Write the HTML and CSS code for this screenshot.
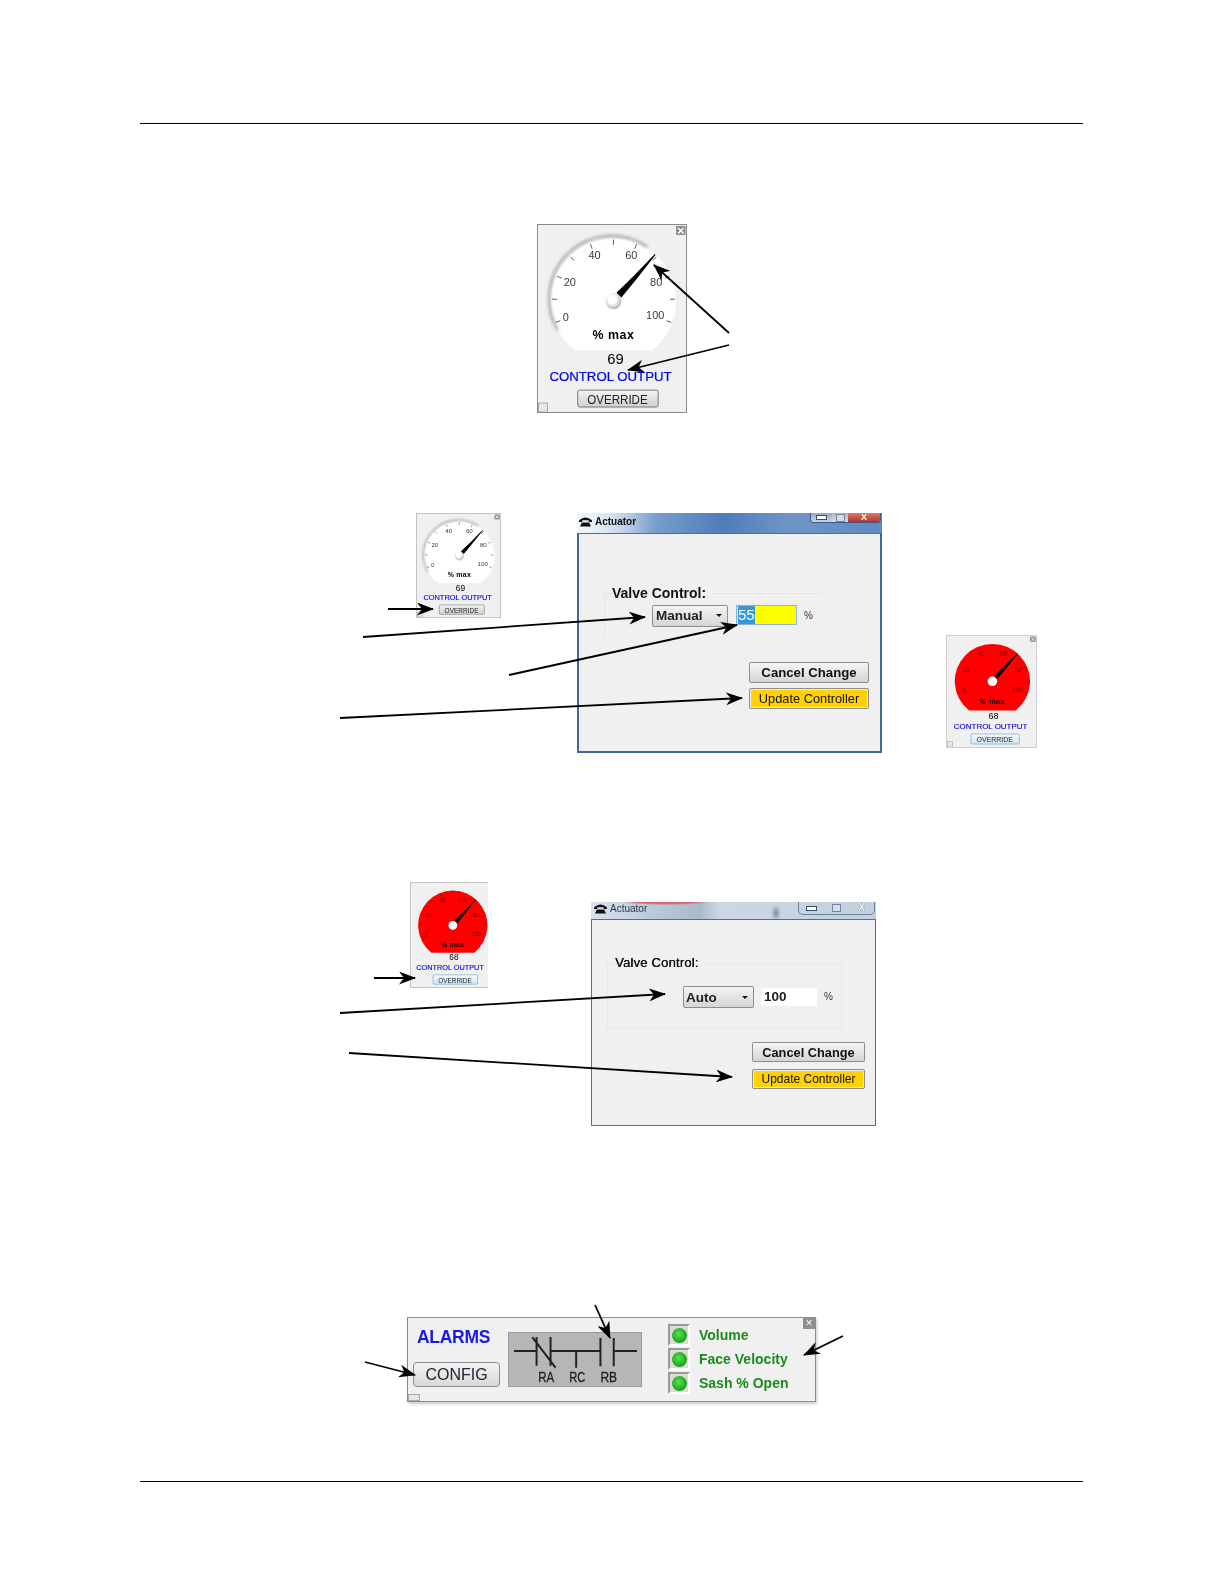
FILE: index.html
```html
<!DOCTYPE html>
<html lang="en">

<head>
    <meta charset="UTF-8">
    <meta name="viewport" content="width=device-width, initial-scale=1.0">
    <title>Actuator control</title>
    <link rel="stylesheet" href="styles.css">
</head>

<body>
    <!-- shared gauge parts -->
    <svg class="defs" aria-hidden="true">
        <defs>
            <linearGradient id="btn" x1="0" y1="0" x2="0" y2="1">
                <stop offset="0" stop-color="#f4f4f4" />
                <stop offset="1" stop-color="#cfcfcf" />
            </linearGradient>
            <linearGradient id="btnblue" x1="0" y1="0" x2="0" y2="1">
                <stop offset="0" stop-color="#f2f9fd" />
                <stop offset="1" stop-color="#cfe6f3" />
            </linearGradient>
            <radialGradient id="hub" cx="0.42" cy="0.38" r="0.7">
                <stop offset="0.35" stop-color="#fff" />
                <stop offset="1" stop-color="#a8a8a8" />
            </radialGradient>
            <filter id="soft" x="-20%" y="-20%" width="140%" height="140%">
                <feGaussianBlur stdDeviation="1.5" />
            </filter>
            <symbol id="ticks" overflow="visible">
                <path d="M76 14.7V19.9M52.8 19.2L54.6 23.9M99.2 19.2L97.4 23.9M32.9 32.1L36.4 35.7M119.1 32.1L115.6 35.7M19.3 51.5L23.9 53.5M132.7 51.5L128.1 53.5M14.1 74.5L19.1 74.7M137.9 74.5L132.9 74.7M17.7 97.9L22.4 96.2M134.3 97.9L129.6 96.2" stroke="#333" stroke-width="0.8" fill="none" />
            </symbol>
            <symbol id="needle" overflow="visible">
                <path d="M117.6 29.2L118.4 30L99.5 54L84 73L79 68L97 50.5Z" fill="#000" />
            </symbol>
            <symbol id="close" overflow="visible">
                <rect x="139" y="1" width="9.5" height="9" fill="#8f8f8f" />
                <path d="M141 3L146.5 8.5M146.5 3L141 8.5" stroke="#fff" stroke-width="1.4" />
            </symbol>
            <symbol id="corner" overflow="visible">
                <rect x="0.5" y="179" width="9" height="9" fill="#e9e9df" stroke="#aaa" />
            </symbol>
        </defs>
    </svg>

    <div class="page">
        <div class="rule"></div>

        <section class="figure figure-one">
            <div class="gauge gauge-main shot">
                <svg viewBox="0 0 149 188" preserveAspectRatio="none">
                    <path class="dial" d="M37 126A63 63 0 1 1 115 126Z" />
                    <path class="dial-shade" d="M20 106A63 63 0 0 1 110 22" filter="url(#soft)" />
                    <use href="#ticks" />
                    <text class="num" x="28" y="97" text-anchor="middle">0</text>
                    <text class="num" x="32" y="61" text-anchor="middle">20</text>
                    <text class="num" x="57" y="34" text-anchor="middle">40</text>
                    <text class="num" x="94" y="34" text-anchor="middle">60</text>
                    <text class="num" x="119" y="61" text-anchor="middle">80</text>
                    <text class="num" x="118" y="95" text-anchor="middle">100</text>
                    <use href="#needle" />
                    <circle cx="76" cy="76.7" r="8" fill="url(#hub)" />
                    <text class="unit" x="76" y="115" text-anchor="middle">% max</text>
                    <text class="value" x="78" y="140" text-anchor="middle">69</text>
                    <text class="caption" x="73" y="157" text-anchor="middle" textLength="123" lengthAdjust="spacingAndGlyphs">CONTROL OUTPUT</text>
                    <rect x="40" y="166" width="81" height="17" rx="2" fill="url(#btn)" stroke="#777" />
                    <text class="override" x="80" y="180" text-anchor="middle" textLength="61" lengthAdjust="spacingAndGlyphs">OVERRIDE</text>
                    <use href="#close" />
                    <use href="#corner" />
                </svg>
            </div>
        </section>

        <section class="figure figure-two">
            <div class="gauge gauge-small shot">
                <svg viewBox="0 0 149 188" preserveAspectRatio="none">
                    <path class="dial" d="M37 126A63 63 0 1 1 115 126Z" />
                    <path class="dial-shade" d="M20 106A63 63 0 0 1 110 22" filter="url(#soft)" />
                    <use href="#ticks" />
                    <text class="num" x="28" y="97" text-anchor="middle">0</text>
                    <text class="num" x="32" y="61" text-anchor="middle">20</text>
                    <text class="num" x="57" y="34" text-anchor="middle">40</text>
                    <text class="num" x="94" y="34" text-anchor="middle">60</text>
                    <text class="num" x="119" y="61" text-anchor="middle">80</text>
                    <text class="num" x="118" y="95" text-anchor="middle">100</text>
                    <use href="#needle" />
                    <circle cx="76" cy="76.7" r="8" fill="url(#hub)" />
                    <text class="unit" x="76" y="115" text-anchor="middle">% max</text>
                    <text class="value" x="78" y="140" text-anchor="middle">69</text>
                    <text class="caption" x="73" y="157" text-anchor="middle" textLength="123" lengthAdjust="spacingAndGlyphs">CONTROL OUTPUT</text>
                    <rect x="40" y="166" width="81" height="17" rx="2" fill="url(#btn)" stroke="#777" />
                    <text class="override" x="80" y="180" text-anchor="middle" textLength="61" lengthAdjust="spacingAndGlyphs">OVERRIDE</text>
                    <use href="#close" />
                    <use href="#corner" />
                </svg>
            </div>

            <div class="window window-one shot">
                <div class="titlebar">
                    <div class="title">
                        <svg class="phone" viewBox="0 0 14 12">
                            <path d="M0 4.5Q7 -1.5 14 4.5V6.5H10.5V4.5H3.5V6.5H0ZM3 7H11L13 11.5H1Z" fill="#111" />
                        </svg>
                        <span>Actuator</span>
                    </div>
                    <div class="winbtns">
                        <span class="winbtn win-min"></span>
                        <span class="winbtn win-max"></span>
                        <span class="winbtn win-close">X</span>
                    </div>
                </div>
                <div class="winbody">
                    <fieldset class="group">
                        <legend>Valve Control:</legend>
                        <div class="control-row">
                            <div class="select"><span>Manual</span><i class="caret"></i></div>
                            <div class="field field-edit"><span class="selected">55</span></div>
                            <span class="percent">%</span>
                        </div>
                    </fieldset>
                    <div class="actions">
                        <button class="btn btn-cancel" type="button">Cancel Change</button>
                        <button class="btn btn-update" type="button">Update Controller</button>
                    </div>
                </div>
            </div>

            <div class="gauge gauge-red-right shot">
                <svg viewBox="0 0 149 188" preserveAspectRatio="none">
                    <path class="dial dial-red" d="M37 126A63 63 0 1 1 115 126Z" />
                    <use href="#ticks" />
                    <text class="num num-red" x="28" y="97" text-anchor="middle">0</text>
                    <text class="num num-red" x="32" y="61" text-anchor="middle">20</text>
                    <text class="num num-red" x="57" y="34" text-anchor="middle">40</text>
                    <text class="num num-red" x="94" y="34" text-anchor="middle">60</text>
                    <text class="num num-red" x="119" y="61" text-anchor="middle">80</text>
                    <text class="num num-red" x="118" y="95" text-anchor="middle">100</text>
                    <use href="#needle" />
                    <circle cx="76" cy="76.7" r="8" fill="#fff" />
                    <text class="unit" x="76" y="115" text-anchor="middle">% max</text>
                    <text class="value" x="78" y="140" text-anchor="middle">68</text>
                    <text class="caption" x="73" y="157" text-anchor="middle" textLength="123" lengthAdjust="spacingAndGlyphs">CONTROL OUTPUT</text>
                    <rect x="40" y="166" width="81" height="17" rx="2" fill="url(#btnblue)" stroke="#6f9db8" />
                    <text class="override" x="80" y="180" text-anchor="middle" textLength="61" lengthAdjust="spacingAndGlyphs">OVERRIDE</text>
                    <use href="#close" />
                    <use href="#corner" />
                </svg>
            </div>
        </section>

        <section class="figure figure-three">
            <div class="gauge gauge-red-left shot">
                <svg viewBox="0 0 140 188" preserveAspectRatio="none">
                    <path class="dial dial-red" d="M37 126A63 63 0 1 1 115 126Z" />
                    <use href="#ticks" />
                    <text class="num num-red" x="28" y="97" text-anchor="middle">0</text>
                    <text class="num num-red" x="32" y="61" text-anchor="middle">20</text>
                    <text class="num num-red" x="57" y="34" text-anchor="middle">40</text>
                    <text class="num num-red" x="94" y="34" text-anchor="middle">60</text>
                    <text class="num num-red" x="119" y="61" text-anchor="middle">80</text>
                    <text class="num num-red" x="118" y="95" text-anchor="middle">100</text>
                    <use href="#needle" />
                    <circle cx="76" cy="76.7" r="8" fill="#fff" />
                    <text class="unit" x="76" y="115" text-anchor="middle">% max</text>
                    <text class="value" x="78" y="140" text-anchor="middle">68</text>
                    <text class="caption" x="71" y="157" text-anchor="middle" textLength="123" lengthAdjust="spacingAndGlyphs">CONTROL OUTPUT</text>
                    <rect x="40" y="166" width="81" height="17" rx="2" fill="url(#btnblue)" stroke="#6f9db8" />
                    <text class="override" x="80" y="180" text-anchor="middle" textLength="61" lengthAdjust="spacingAndGlyphs">OVERRIDE</text>
                </svg>
            </div>

            <div class="window window-two shot">
                <div class="titlebar">
                    <div class="title">
                        <svg class="phone" viewBox="0 0 14 12">
                            <path d="M0 4.5Q7 -1.5 14 4.5V6.5H10.5V4.5H3.5V6.5H0ZM3 7H11L13 11.5H1Z" fill="#111" />
                        </svg>
                        <span>Actuator</span>
                    </div>
                    <div class="winbtns">
                        <span class="winbtn win-min"></span>
                        <span class="winbtn win-max"></span>
                        <span class="winbtn win-close">X</span>
                    </div>
                </div>
                <div class="winbody">
                    <fieldset class="group">
                        <legend>Valve Control:</legend>
                        <div class="control-row">
                            <div class="select"><span>Auto</span><i class="caret"></i></div>
                            <div class="field">100</div>
                            <span class="percent">%</span>
                        </div>
                    </fieldset>
                    <div class="actions">
                        <button class="btn btn-cancel" type="button">Cancel Change</button>
                        <button class="btn btn-update" type="button">Update Controller</button>
                    </div>
                </div>
            </div>
        </section>

        <section class="figure figure-four">
            <div class="alarms shot">
                <div class="alarm-left">
                    <div class="alarm-title">ALARMS</div>
                    <button class="config" type="button">CONFIG</button>
                </div>
                <svg class="ladder" viewBox="472 125 403 165">
                    <path d="M490 182H558M600 182H750M790 182H860M558 140V226M600 140V226M545 140L615 232M677 182V232M750 143V228M790 143V228" stroke="#222" stroke-width="6" fill="none" />
                    <text x="587" y="276" text-anchor="middle" textLength="48" lengthAdjust="spacingAndGlyphs">RA</text>
                    <text x="680" y="276" text-anchor="middle" textLength="48" lengthAdjust="spacingAndGlyphs">RC</text>
                    <text x="775" y="276" text-anchor="middle" textLength="50" lengthAdjust="spacingAndGlyphs">RB</text>
                </svg>
                <ul class="leds">
                    <li><span class="led"><i></i></span>Volume</li>
                    <li><span class="led"><i></i></span>Face Velocity</li>
                    <li><span class="led"><i></i></span>Sash % Open</li>
                </ul>
                <span class="alarm-close">✕</span>
                <span class="alarm-corner"></span>
            </div>
        </section>

        <div class="rule"></div>

        <!-- callout arrows drawn across the figures -->
        <svg class="arrows" viewBox="0 0 1224 1584">
            <defs>
                <marker id="head" viewBox="0 0 17 13" refX="16" refY="6.5" markerWidth="17" markerHeight="13" markerUnits="userSpaceOnUse" orient="auto">
                    <path d="M0 0L17 6.5L0 13L5 6.5Z" fill="#000" />
                </marker>
            </defs>
            <g stroke="#000" stroke-width="1.8" fill="none">
                <line x1="729" y1="333" x2="654" y2="265" marker-end="url(#head)" />
                <line x1="729" y1="345" x2="628" y2="370" marker-end="url(#head)" />
                <line x1="388" y1="609" x2="433" y2="609" marker-end="url(#head)" />
                <line x1="363" y1="637" x2="645" y2="617" marker-end="url(#head)" />
                <line x1="509" y1="675" x2="737" y2="625" marker-end="url(#head)" />
                <line x1="340" y1="718" x2="742" y2="698" marker-end="url(#head)" />
                <line x1="374" y1="978" x2="415" y2="978" marker-end="url(#head)" />
                <line x1="340" y1="1013" x2="665" y2="994" marker-end="url(#head)" />
                <line x1="349" y1="1053" x2="732" y2="1077" marker-end="url(#head)" />
                <line x1="365" y1="1362" x2="415" y2="1375" marker-end="url(#head)" />
                <line x1="595" y1="1305" x2="610" y2="1338" marker-end="url(#head)" />
                <line x1="843" y1="1336" x2="804" y2="1355" marker-end="url(#head)" />
            </g>
        </svg>
    </div>
</body>

</html>
```

FILE: styles.css
```css
* {
    margin: 0;
    padding: 0;
    box-sizing: border-box;
}

body {
    background-color: white;
    font-family: "Liberation Sans", Arial, sans-serif;
}

.defs {
    position: absolute;
    width: 0;
    height: 0;
}

.page {
    position: relative;
    width: 1224px;
    height: 1584px;
    padding-top: 123px;
}

.rule {
    height: 1px;
    background-color: #000;
    margin-left: 140px;
    width: 943px;
}

.figure {
    position: relative;
}

.figure-one {
    height: 376px;
}

.figure-two {
    height: 360px;
}

.figure-three {
    height: 420px;
}

.figure-four {
    height: 201px;
}

.arrows {
    position: absolute;
    top: 0;
    left: 0;
    width: 1224px;
    height: 1584px;
    pointer-events: none;
}

.shot {
    filter: blur(0.35px);
}

/* gauges */

.gauge {
    position: absolute;
    background-color: #f0f0f0;
    border: 1px solid #8a8a8a;
}

.gauge svg {
    display: block;
    width: 100%;
    height: 100%;
}

.gauge-main {
    top: 100px;
    left: 537px;
    width: 150px;
    height: 189px;
}

.gauge-small {
    top: 13px;
    left: 416px;
    width: 85px;
    height: 105px;
    border-color: #c4c4c4;
}

.gauge-red-right {
    top: 135px;
    left: 946px;
    width: 91px;
    height: 113px;
    border-color: #cfcfcf;
}

.gauge-red-left {
    top: 22px;
    left: 410px;
    width: 78px;
    height: 106px;
    border-color: #c4c4c4;
    border-right: none;
}

.dial {
    fill: #fff;
}

.dial-red {
    fill: #ff0000;
}

.dial-shade {
    fill: none;
    stroke: #a8a8a8;
    stroke-width: 2.5;
}

.gauge text {
    font-family: "Liberation Sans", Arial, sans-serif;
}

.num {
    font-size: 11px;
    fill: #2c3c48;
}

.num-red {
    fill: #7a0000;
}

.unit {
    font-size: 12.5px;
    font-weight: bold;
    letter-spacing: 0.5px;
    fill: #000;
}

.value {
    font-size: 15px;
    fill: #000;
}

.caption {
    font-size: 12.5px;
    fill: #0000e6;
    stroke: #0000e6;
    stroke-width: 0.2;
}

.override {
    font-size: 12px;
    fill: #222;
}

/* actuator windows */

.window {
    position: absolute;
    display: flex;
    flex-direction: column;
}

.window-one {
    top: 13px;
    left: 577px;
    width: 305px;
    height: 240px;
}

.window-two {
    top: 42px;
    left: 591px;
    width: 285px;
    height: 224px;
}

.titlebar {
    display: flex;
    justify-content: space-between;
    align-items: flex-start;
    flex-shrink: 0;
}

.window-one .titlebar {
    height: 20px;
    background: linear-gradient(90deg, #e4edf5 0%, #b8cfe6 9%, #7ea3cf 22%, #4f7dba 48%, #6f95c6 70%, #5f8ac2 100%);
}

.window-two .titlebar {
    height: 17px;
    padding-left: 1px;
    background:
        radial-gradient(ellipse 45px 3px at 75px 0, #d86a78 0%, #d86a78 60%, transparent 100%),
        radial-gradient(ellipse 5px 8px at 185px 11px, #7c8a99 0%, transparent 100%),
        linear-gradient(90deg, #d8e2ee 0%, #bccbdc 20%, #a9bacd 38%, #cbd7e4 45%, #c2d0df 100%);
}

.title {
    display: flex;
    align-items: center;
    gap: 3px;
    height: 100%;
    padding: 0 0 4px 2px;
    font-size: 10px;
    color: #111;
}

.window-one .title {
    font-weight: bold;
    background: linear-gradient(90deg, #f0f5f9, rgba(240, 245, 249, 0));
    padding-right: 20px;
}

.window-two .title {
    color: #2c3a48;
}

.phone {
    width: 13px;
    height: 11px;
}

.winbtns {
    display: flex;
    height: 10px;
    margin-right: 1px;
}

.winbtn {
    display: flex;
    align-items: center;
    justify-content: center;
    font-size: 9px;
    font-weight: bold;
    line-height: 1;
    color: #fff;
}

.window-one .winbtns {
    border: 1px solid #3e5a80;
    border-top: none;
    border-radius: 0 0 4px 4px;
    overflow: hidden;
}

.window-one .win-min {
    width: 21px;
    background: linear-gradient(#8fa9c8, #c7d6e6);
}

.window-one .win-max {
    width: 16px;
    background: linear-gradient(#a4bad2, #d5e0ec);
}

.window-one .win-close {
    width: 32px;
    background: linear-gradient(#d9786b, #b8352a);
}

.win-min::after {
    content: "";
    width: 9px;
    height: 3px;
    background: #fff;
    border: 1px solid #33506f;
}

.win-max::after {
    content: "";
    width: 7px;
    height: 6px;
    background: #d4deea;
    border: 1px solid #6f85a0;
}

.window-two .winbtns {
    height: 13px;
    width: 77px;
    border: 1px solid #6f8299;
    border-top: none;
    border-radius: 0 0 5px 5px;
    justify-content: space-around;
}

.window-two .winbtn {
    width: 18px;
}

.window-two .win-close {
    color: #fff;
    text-shadow: 0 0 1px #222;
    font-size: 10px;
}

.winbody {
    flex: 1;
    display: flex;
    flex-direction: column;
    background-color: #f0f0f0;
}

.window-one .winbody {
    border: 2px solid #40699a;
    border-top: 1px solid #47719f;
    padding: 0 11px 0 25px;
}

.window-two .winbody {
    border: 1px solid #56708c;
    padding: 0 10px 0 15px;
}

.group {
    display: block;
}

.window-one .group {
    width: 217px;
    height: 54px;
    margin-top: 51px;
    padding-top: 4px;
    border: 1px solid #e4e4e4;
    border-right: none;
    border-bottom: none;
}

.window-two .group {
    width: 235px;
    height: 74px;
    margin-top: 35px;
    padding-top: 15px;
    border: 1px solid #e6e6e6;
}

legend {
    margin-left: 7px;
    line-height: 16px;
    color: #111;
    background-color: #f0f0f0;
    padding-right: 6px;
}

.window-one legend {
    font-size: 14px;
    font-weight: bold;
}

.window-two legend {
    font-size: 13px;
    letter-spacing: 0.2px;
    text-shadow: 0.4px 0 0 #111;
}

.control-row {
    display: flex;
    align-items: flex-start;
}

.window-one .control-row {
    padding-left: 47px;
}

.window-two .control-row {
    padding-left: 75px;
}

.select {
    display: flex;
    align-items: center;
    justify-content: space-between;
    height: 22px;
    font-size: 13.5px;
    font-weight: bold;
    color: #222;
    border: 1px solid #8e8e8e;
    border-radius: 2px;
    background: linear-gradient(#f4f4f4, #d6d6d6);
}

.window-one .select {
    width: 76px;
    padding: 0 5px 2px 3px;
}

.window-two .select {
    width: 71px;
    padding: 0 5px 0 2px;
}

.caret {
    width: 0;
    height: 0;
    border-left: 3px solid transparent;
    border-right: 3px solid transparent;
    border-top: 3px solid #111;
}

.field {
    font-size: 13.5px;
    font-weight: bold;
    color: #222;
    background-color: #fff;
    line-height: 18px;
    height: 18px;
    width: 56px;
    margin-left: 7px;
    margin-top: 2px;
    padding-left: 3px;
}

.field-edit {
    width: 61px;
    height: 20px;
    line-height: 18px;
    margin-left: 8px;
    margin-top: 0;
    padding-left: 1px;
    background-color: #ffff00;
    border: 1px solid #8fb2d8;
    font-size: 15px;
    font-weight: normal;
}

.selected {
    display: inline-block;
    height: 18px;
    color: #fff;
    background-color: #3798dc;
}

.percent {
    font-size: 10px;
    color: #333;
    margin-left: 7px;
    margin-top: 5px;
}

.actions {
    display: flex;
    flex-direction: column;
    align-items: flex-end;
}

.window-one .actions {
    margin-top: 23px;
    gap: 5px;
}

.window-two .actions {
    margin-top: 13px;
    gap: 7px;
}

.btn {
    font-family: inherit;
    border: 1px solid #8e8e8e;
    border-radius: 2px;
    color: #111;
}

.window-one .btn {
    width: 120px;
    height: 21px;
}

.window-two .btn {
    width: 113px;
    height: 20px;
}

.window-one .btn-cancel {
    font-size: 13.2px;
}

.window-two .btn-cancel {
    font-size: 12.8px;
}

.window-one .btn-update {
    font-size: 12.8px;
}

.window-two .btn-update {
    font-size: 12px;
}

.btn-cancel {
    font-weight: bold;
    background: linear-gradient(#f6f6f6, #d4d4d4);
}

.btn-update {
    background-color: #ffd200;
    box-shadow: inset 0 0 0 1px #f0eee4;
}

/* alarm panel */

.alarms {
    position: absolute;
    top: 37px;
    left: 407px;
    width: 409px;
    height: 85px;
    display: flex;
    align-items: flex-start;
    padding-left: 5px;
    background-color: #f0f0f0;
    border: 1px solid #8c8c8c;
    box-shadow: 1px 2px 3px #ccc;
}

.alarm-left {
    width: 87px;
    flex-shrink: 0;
}

.alarm-title {
    margin-top: 9px;
    padding-left: 4px;
    line-height: 20px;
    font-size: 17.5px;
    font-weight: bold;
    letter-spacing: -0.3px;
    color: #1a1ae6;
}

.config {
    display: block;
    width: 87px;
    height: 25px;
    margin-top: 15px;
    font-family: inherit;
    font-size: 16px;
    color: #223;
    border: 1px solid #8e8e8e;
    border-radius: 4px;
    background: linear-gradient(#f4f4f4, #d8d8d8);
}

.ladder {
    flex-shrink: 0;
    width: 134px;
    height: 55px;
    margin-top: 14px;
    margin-left: 8px;
    background-color: #b6b6b6;
    outline: 1px solid #9a9a9a;
    outline-offset: -1px;
}

.ladder text {
    font-family: "Liberation Sans", Arial, sans-serif;
    font-size: 46px;
    fill: #222;
    stroke: #222;
    stroke-width: 1;
}

.leds {
    list-style: none;
    display: flex;
    flex-direction: column;
    gap: 2px;
    margin-top: 6px;
    margin-left: 26px;
}

.leds li {
    display: flex;
    align-items: center;
    gap: 9px;
    height: 22px;
    font-size: 14px;
    font-weight: bold;
    color: #1c8a1c;
}

.led {
    display: flex;
    align-items: center;
    justify-content: center;
    width: 22px;
    height: 22px;
    background-color: #dcdcd0;
    border: 2px solid;
    border-color: #9a9a9a #fff #fff #9a9a9a;
}

.led i {
    width: 15px;
    height: 15px;
    border-radius: 50%;
    background: radial-gradient(circle at 45% 40%, #55e055 0%, #27b027 55%, #148014 100%);
}

.alarm-close {
    position: absolute;
    top: -1px;
    right: 0;
    width: 12px;
    height: 12px;
    display: flex;
    align-items: center;
    justify-content: center;
    background-color: #8f8f8f;
    color: #fff;
    font-size: 9px;
    font-weight: bold;
    font-family: "DejaVu Sans", sans-serif;
}

.alarm-corner {
    position: absolute;
    left: 0;
    bottom: 0;
    width: 12px;
    height: 7px;
    background-color: #e9e9df;
    border: 1px solid #aaa;
}
```
